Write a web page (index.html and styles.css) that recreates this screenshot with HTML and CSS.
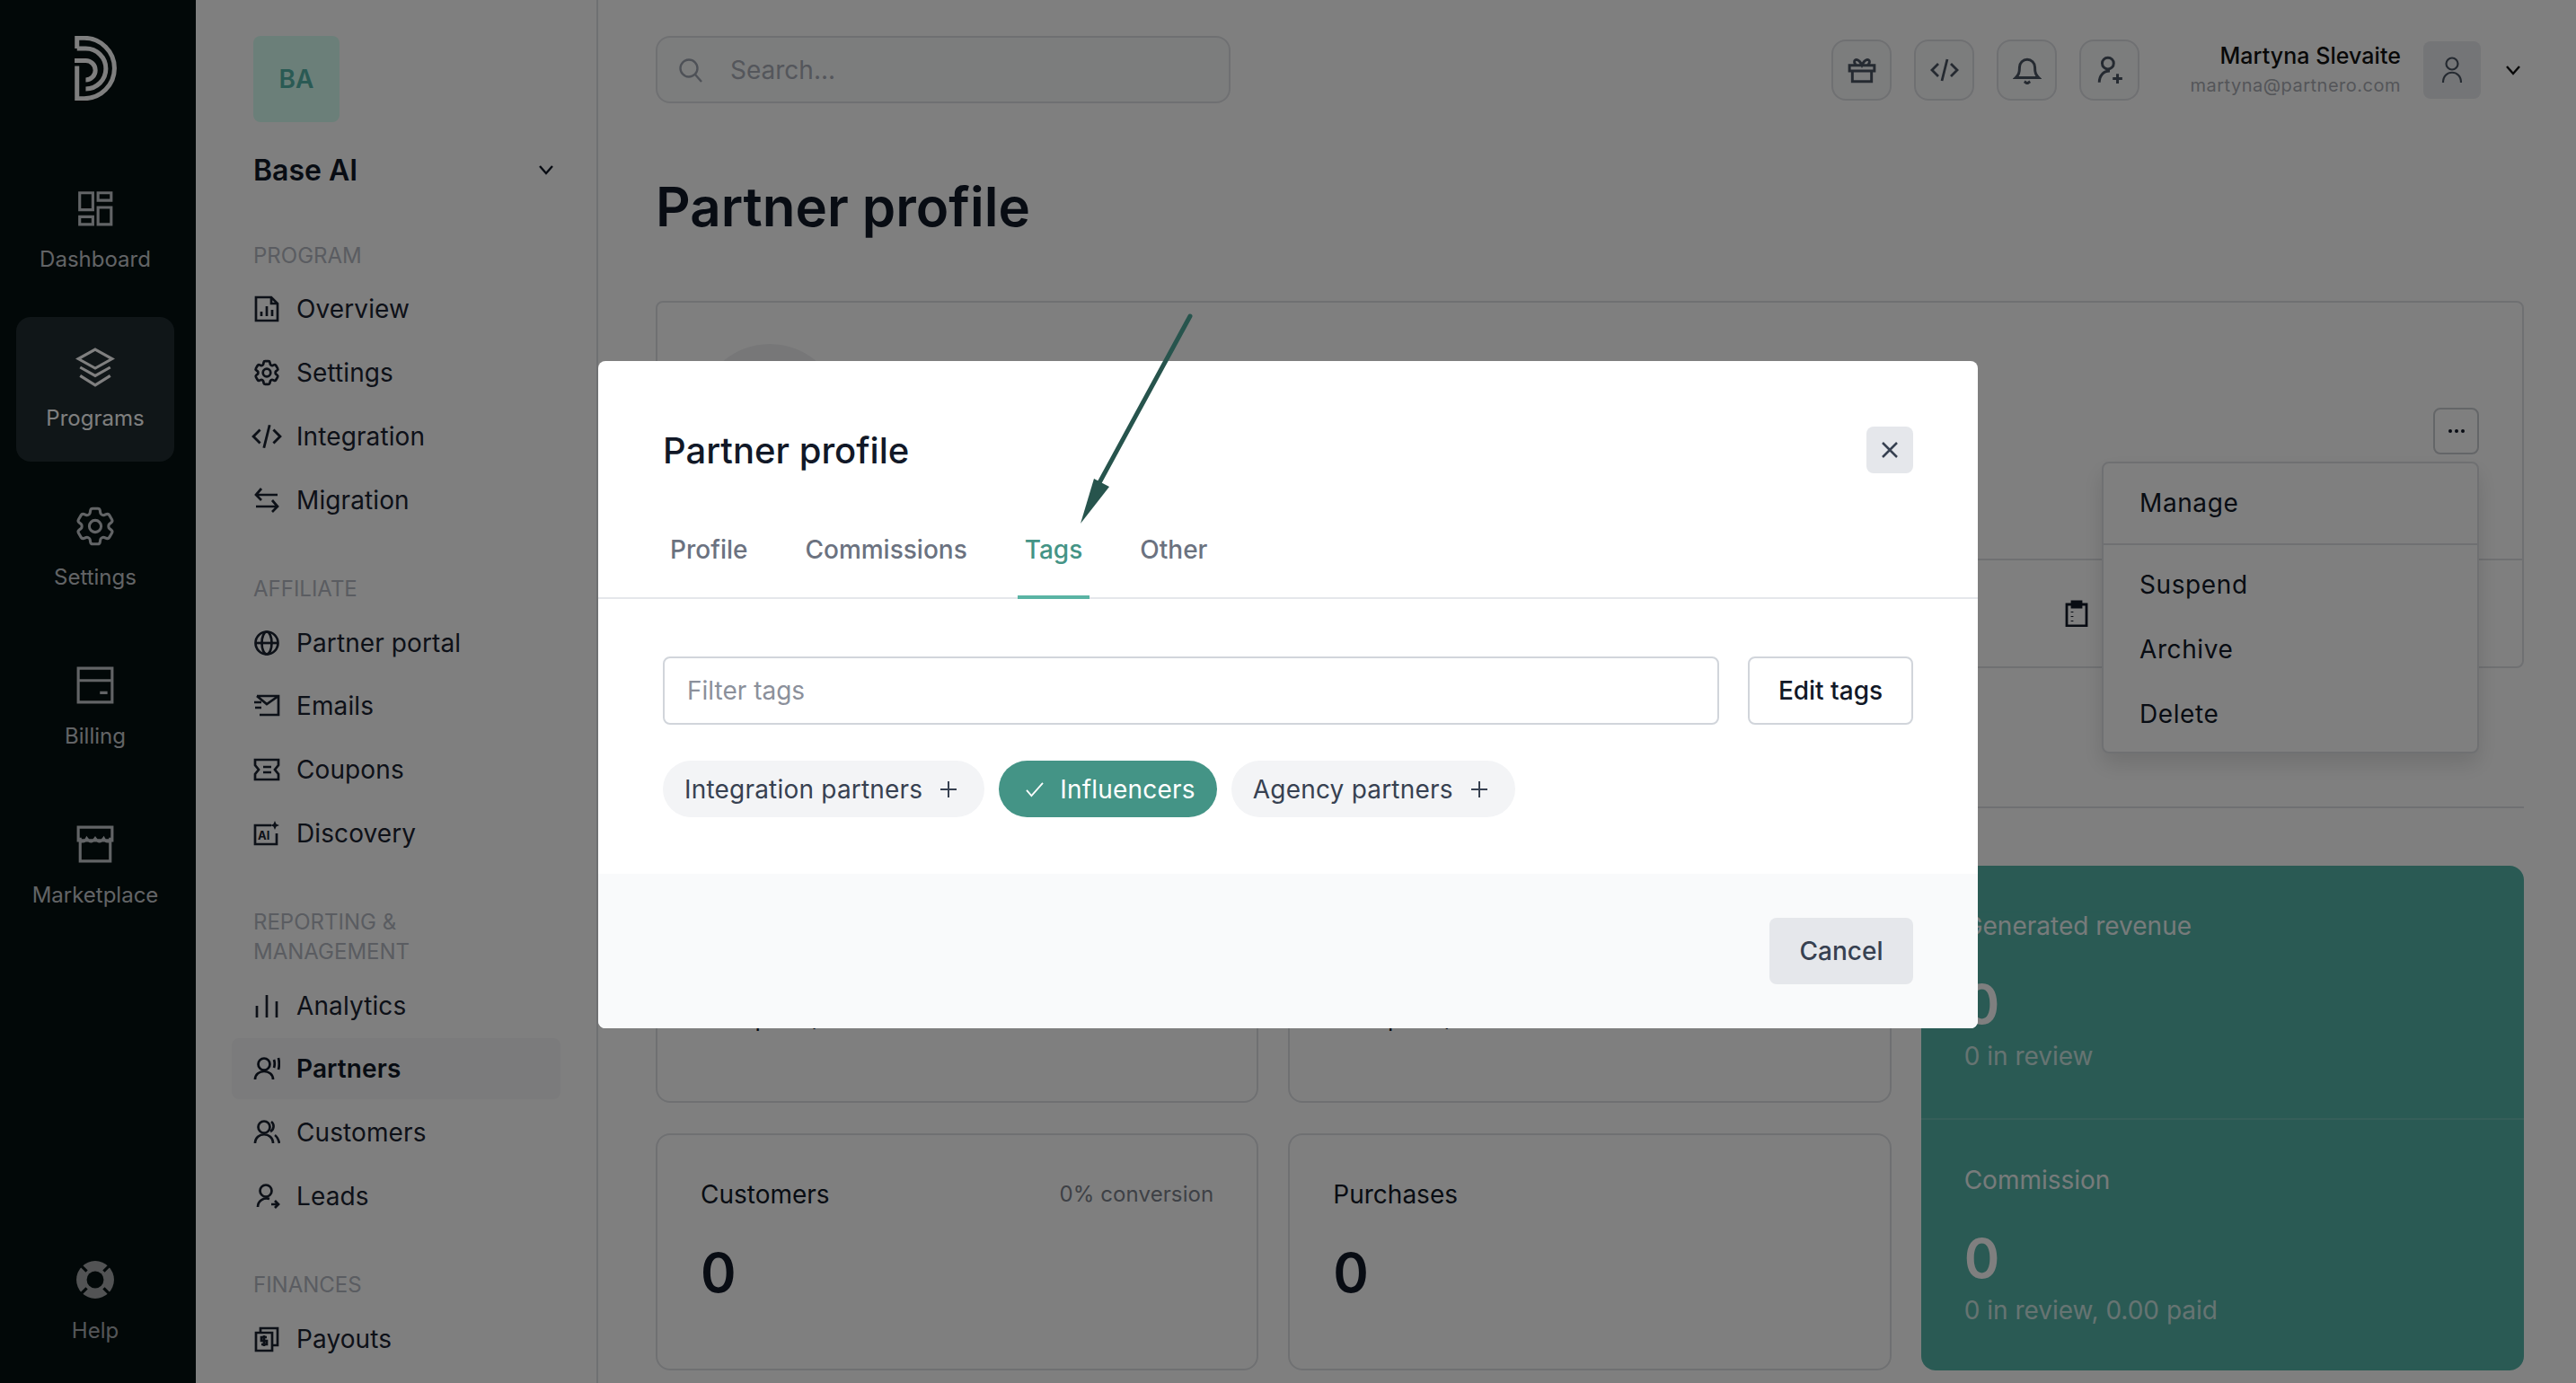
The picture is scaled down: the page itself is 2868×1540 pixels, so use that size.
FILE: index.html
```html
<!DOCTYPE html>
<html lang="en">
<head>
<meta charset="utf-8">
<title>Partner profile</title>
<link rel="stylesheet" href="styles.css">
</head>
<body>
<svg class="defs" width="0" height="0" aria-hidden="true">
  <symbol id="i-gear" viewBox="0 0 24 24"><path d="M9.594 3.94c.09-.542.56-.94 1.11-.94h2.593c.55 0 1.02.398 1.11.94l.213 1.281c.063.374.313.686.645.87.074.04.147.083.22.127.325.196.72.257 1.075.124l1.217-.456a1.125 1.125 0 0 1 1.37.49l1.296 2.247a1.125 1.125 0 0 1-.26 1.431l-1.003.827c-.293.241-.438.613-.43.992a7.723 7.723 0 0 1 0 .255c-.008.378.137.75.43.991l1.004.827c.424.35.534.955.26 1.43l-1.298 2.247a1.125 1.125 0 0 1-1.369.491l-1.217-.456c-.355-.133-.75-.072-1.076.124a6.47 6.47 0 0 1-.22.128c-.331.183-.581.495-.644.869l-.213 1.281c-.09.543-.56.94-1.11.94h-2.594c-.55 0-1.019-.398-1.11-.94l-.213-1.281c-.062-.374-.312-.686-.644-.87a6.52 6.52 0 0 1-.22-.127c-.325-.196-.72-.257-1.076-.124l-1.217.456a1.125 1.125 0 0 1-1.369-.49l-1.297-2.247a1.125 1.125 0 0 1 .26-1.431l1.004-.827c.292-.24.437-.613.43-.991a6.932 6.932 0 0 1 0-.255c.007-.38-.138-.751-.43-.992l-1.004-.827a1.125 1.125 0 0 1-.26-1.43l1.297-2.247a1.125 1.125 0 0 1 1.37-.491l1.216.456c.356.133.751.072 1.076-.124.072-.044.146-.086.22-.128.332-.183.582-.495.644-.869l.214-1.28Z"/><circle cx="12" cy="12" r="3"/></symbol>
  <symbol id="i-code" viewBox="0 0 32 32"><path d="M9 9 2 16l7 7M23 9l7 7-7 7M19 4l-6 24"/></symbol>
  <symbol id="i-chev" viewBox="0 0 24 24"><path d="m5 8 7 8 7-8"/></symbol>
  <symbol id="i-plus" viewBox="0 0 20 20"><path d="M10 1v18M1 10h18"/></symbol>
</svg>

<div class="app">
  <nav class="rail">
    <svg class="logo" viewBox="38 30 140 215"><path d="M46 72V37h24a100.500 100.500 0 0 1 0 201H46V130M46 72h29a67 67 0 0 1 0 134M38 112h37a32 32 0 0 1 0 64"/></svg>
    <ul class="rail-list">
      <li class="rail-item">
        <svg class="rail-icon" viewBox="0 0 42 42"><path d="M4.500 4.500h14v18h-14zM24 4.500h14v8H24zM4.500 30h14v8h-14zM24 20h14v18H24z"/></svg>
        <span>Dashboard</span>
      </li>
      <li class="rail-item is-active">
        <svg class="rail-icon" viewBox="0 0 42 42"><path d="M21 2 39 12 21 22 3 12zM5 21l16 9 16-9M5 30l16 10 16-10"/></svg>
        <span>Programs</span>
      </li>
      <li class="rail-item">
        <svg class="rail-icon icon-gear" viewBox="2 2 20 20"><use href="#i-gear" width="24" height="24"/></svg>
        <span>Settings</span>
      </li>
      <li class="rail-item">
        <svg class="rail-icon" viewBox="0 0 42 42"><path d="M3 3h36v36H3zM3 16h36M26 29h8"/></svg>
        <span>Billing</span>
      </li>
      <li class="rail-item">
        <svg class="rail-icon" viewBox="0 0 42 42"><path d="M3 3h36v14H3zM5 14v25h32V14M3 15c3 4 7 4 9 0 3 4 6 4 9 0 3 4 6 4 9 0 2 4 6 4 9 0"/></svg>
        <span>Marketplace</span>
      </li>
      <li class="rail-item rail-help">
        <svg class="rail-icon help-icon" viewBox="0 0 42 42"><circle class="help-disc" cx="21" cy="21" r="20"/><circle class="help-hole" cx="21" cy="21" r="9"/><path class="help-cut" d="M6 6l6 6M36 6l-6 6M6 36l6-6M36 36l-6-6"/></svg>
        <span>Help</span>
      </li>
    </ul>
  </nav>

  <aside class="side">
    <div class="side-brand">
      <div class="brand-tile">BA</div>
      <div class="brand-row"><span>Base AI</span><svg class="chev" viewBox="0 0 24 24"><use href="#i-chev"/></svg></div>
    </div>

    <section class="side-sec">
      <h3 class="side-label">PROGRAM</h3>
      <a class="side-item"><svg viewBox="0 0 30 30"><path d="M3 2h17l7 7v19H3zM20 2v7h7M9 23v-5M15 23V12M21 23v-7"/></svg>Overview</a>
      <a class="side-item"><svg class="icon-gear" viewBox="1.500 1.500 21 21"><use href="#i-gear" width="24" height="24"/></svg>Settings</a>
      <a class="side-item"><svg class="icon-code" viewBox="0 0 32 32"><use href="#i-code"/></svg>Integration</a>
      <a class="side-item"><svg viewBox="0 0 30 30"><path d="M9 2 3 9l6 6M3 9h24M21 15l6 7-6 6M27 22H3"/></svg>Migration</a>
    </section>

    <section class="side-sec">
      <h3 class="side-label">AFFILIATE</h3>
      <a class="side-item"><svg viewBox="0 0 30 30"><circle cx="15" cy="15" r="12.500"/><ellipse cx="15" cy="15" rx="5.500" ry="12.500"/><path d="M3 15h24"/></svg>Partner portal</a>
      <a class="side-item"><svg viewBox="0 0 30 30"><path d="M4 4h24v21H7M4 4l11 9 13-9M1 11h8M2 17h7"/></svg>Emails</a>
      <a class="side-item"><svg viewBox="0 0 30 30"><path d="M2 4h26v6l-4 5 4 5v6H2v-6l4-5-4-5zM11 12h9M11 18h9"/></svg>Coupons</a>
      <a class="side-item"><svg viewBox="0 0 30 30"><path d="M20 6H2v21h24V15"/><text class="ai-text" x="5" y="22">AI</text><path class="fill" d="m24 1 1.500 3.500L29 6l-3.500 1.500L24 11l-1.500-3.500L19 6l3.500-1.500z"/></svg>Discovery</a>
    </section>

    <section class="side-sec">
      <h3 class="side-label">REPORTING &amp;<br>MANAGEMENT</h3>
      <a class="side-item"><svg viewBox="0 0 30 30"><path d="M4 15v13M15 3v25M26 10v18"/></svg>Analytics</a>
      <a class="side-item is-current"><svg viewBox="0 0 30 30"><circle cx="12" cy="10" r="6.500"/><path d="M2 27c0-12 20-12 20 0M23 5c1 3 1 6 0 9M28 3c1 4 1 9 0 13"/></svg>Partners</a>
      <a class="side-item"><svg viewBox="0 0 30 30"><circle cx="12" cy="9" r="6.500"/><path d="M2 27c0-13 20-13 20 0M20 3c4 3 3 9-1 11M24 18c3 2 4 5 5 9"/></svg>Customers</a>
      <a class="side-item"><svg viewBox="0 0 30 30"><circle cx="14" cy="9" r="6.500"/><path d="M5 27c0-7 7-11 13-9M20 24h8M24 20l4 4-4 4"/></svg>Leads</a>
    </section>

    <section class="side-sec">
      <h3 class="side-label">FINANCES</h3>
      <a class="side-item"><svg viewBox="0 0 30 30"><path d="M8 8V3h19v19h-6M3 8h18v20H3zM15 13H9v4h6v4H9M12 11v12"/></svg>Payouts</a>
    </section>
  </aside>

  <main class="main">
    <header class="topbar">
      <label class="search">
        <svg viewBox="0 0 30 30"><circle cx="13" cy="13" r="9.500"/><path d="m20 20 7 8"/></svg>
        <input class="search-input" placeholder="Search...">
      </label>
      <div class="top-right">
        <button class="top-btn"><svg viewBox="0 0 30 30"><path d="M2 10h26v6H2zM5 16v11h20V16M9 10c-5-5 1-9 5-2l1 2 1-2c4-7 10-3 5 2"/></svg></button>
        <button class="top-btn"><svg viewBox="0 0 32 32"><use href="#i-code"/></svg></button>
        <button class="top-btn"><svg viewBox="0 0 30 30"><path d="M3 23c3-3 4-5 4-11a8 8 0 0 1 16 0c0 6 1 8 4 11zM12 27l3 2 3-2"/></svg></button>
        <button class="top-btn"><svg viewBox="0 0 30 30"><circle cx="13" cy="8" r="6"/><path d="M4 28c0-7 4-12 11-12M18 24h10M23 19v10"/></svg></button>
        <div class="user">
          <div class="user-name">Martyna Slevaite</div>
          <div class="user-mail">martyna@partnero.com</div>
        </div>
        <div class="avatar"><svg viewBox="0 0 30 30"><circle cx="15" cy="8" r="6.500"/><path d="M5 29c0-15 20-15 20 0"/></svg></div>
        <svg class="chev top-chev" viewBox="0 0 24 24"><use href="#i-chev"/></svg>
      </div>
    </header>

    <h1 class="page-title">Partner profile</h1>

    <section class="profile">
      <div class="profile-top">
        <div class="profile-photo"></div>
        <button class="dots"><i></i><i></i><i></i></button>
      </div>
      <div class="profile-bottom">
        <svg class="clip" viewBox="0 0 28 30"><path d="M3 5h22v24H3zM9 2h10v6H9zM9 13v1M9 18v1M9 23v1"/></svg>
      </div>
      <div class="menu">
        <div class="menu-head">Manage</div>
        <div class="menu-group">
          <div class="menu-item">Suspend</div>
          <div class="menu-item">Archive</div>
          <div class="menu-item">Delete</div>
        </div>
      </div>
    </section>

    <hr class="rule">

    <section class="stats">
      <div class="stat">
        <div class="stat-head"><span>Clicks</span></div>
        <div class="stat-num">0<span class="stat-note">per 2/0</span></div>
      </div>
      <div class="stat">
        <div class="stat-head"><span>Signups</span></div>
        <div class="stat-num">0<span class="stat-note">per 2/0</span></div>
      </div>
      <div class="stat-teal">
        <div class="teal-block">
          <div class="teal-label">Generated revenue</div>
          <div class="teal-num">0</div>
          <div class="teal-sub">0 in review</div>
        </div>
        <div class="teal-block teal-second">
          <div class="teal-label">Commission</div>
          <div class="teal-num">0</div>
          <div class="teal-sub">0 in review, 0.00 paid</div>
        </div>
      </div>
      <div class="stat">
        <div class="stat-head"><span>Customers</span><span class="stat-side">0% conversion</span></div>
        <div class="stat-num">0</div>
      </div>
      <div class="stat">
        <div class="stat-head"><span>Purchases</span></div>
        <div class="stat-num">0</div>
      </div>
    </section>
  </main>
</div>

<div class="scrim">
  <div class="modal">
    <div class="modal-head">
      <h2 class="modal-title">Partner profile</h2>
      <button class="close"><svg viewBox="0 0 20 20"><path d="m2 2 16 16M18 2 2 18"/></svg></button>
    </div>
    <div class="tabs">
      <span class="tab">Profile</span>
      <span class="tab">Commissions</span>
      <span class="tab is-on">Tags</span>
      <span class="tab">Other</span>
    </div>
    <div class="modal-body">
      <div class="filter-row">
        <input class="filter" placeholder="Filter tags">
        <button class="edit">Edit tags</button>
      </div>
      <div class="chips">
        <span class="chip">Integration partners<svg viewBox="0 0 20 20"><use href="#i-plus"/></svg></span>
        <span class="chip is-on"><svg viewBox="0 0 24 20"><path d="m2 11 6 7L22 2"/></svg>Influencers</span>
        <span class="chip">Agency partners<svg viewBox="0 0 20 20"><use href="#i-plus"/></svg></span>
      </div>
    </div>
    <div class="modal-foot"><button class="cancel">Cancel</button></div>
  </div>
  <svg class="arrow" viewBox="0 0 140 250"><path class="arrow-line" d="M128 9 24 200"/><path class="arrow-head" d="M6 240 21 190 38 199Z"/></svg>
</div>
</body>
</html>
```

FILE: styles.css
```css
* { box-sizing: border-box; }
html, body { margin: 0; height: 100%; }
body {
  width: 2868px;
  height: 1540px;
  overflow: hidden;
  position: relative;
  background: #fff;
  color: #111827;
  font-family: Inter, "Noto Sans", sans-serif;
  font-size: 28px;
}
h1, h2, h3, ul { margin: 0; padding: 0; list-style: none; font: inherit; }
button { font: inherit; cursor: pointer; }
input { font: inherit; }
.defs { display: block; position: absolute; }

svg { fill: none; stroke: currentColor; stroke-width: 2; flex: none; }

.app { display: flex; width: 2868px; height: 1540px; overflow: hidden; }

/* rail */
.rail {
  width: 218px;
  flex: none;
  background: #041010;
  color: #c4c8cc;
  padding: 40px 24px 10px 18px;
  display: flex;
  flex-direction: column;
}
.logo { width: 47px; height: 72px; margin-left: 65px; stroke-width: 15; color: #fff; }
.rail-list { flex: 1; margin-top: 64px; display: flex; flex-direction: column; gap: 16px; }
.rail-item {
  height: 161px;
  border-radius: 16px;
  display: flex;
  flex-direction: column;
  align-items: center;
  padding-top: 34px;
  font-size: 24px;
  letter-spacing: 0;
  line-height: 32px;
}
.rail-item span { margin-top: 19px; }
.rail-item.is-active { background: #202c30; color: #fff; }
.rail-icon { width: 44px; height: 44px; stroke-width: 3; }
.rail-icon.icon-gear { stroke-width: 1.400; }
.rail-help { margin-top: auto; color: #a8acb0; }
.help-disc { fill: #a4a6a8; stroke: none; }
.help-hole { fill: #041010; stroke: none; }
.help-cut { stroke: #041010; stroke-width: 3; }

/* secondary sidebar */
.side {
  width: 448px;
  flex: none;
  border-right: 2px solid #dfe1e5;
  padding: 40px 40px 0;
  overflow: hidden;
}
.side-brand { padding-left: 24px; }
.brand-tile {
  width: 96px;
  height: 96px;
  border-radius: 8px;
  background: #d6fef2;
  color: #54b4a8;
  font-weight: 600;
  display: flex;
  align-items: center;
  justify-content: center;
}
.brand-row {
  margin-top: 31px;
  height: 44px;
  display: flex;
  align-items: center;
  justify-content: space-between;
  font-size: 32px;
  font-weight: 600;
  padding-right: 4px;
}
.chev { width: 24px; height: 24px; stroke-width: 2.400; }
.side-sec { margin-top: 48.500px; display: flex; flex-direction: column; gap: 2.700px; }
.side-brand + .side-sec { margin-top: 57px; }
.side-label {
  font-size: 24px;
  line-height: 33px;
  color: #b4b9c2;
  padding-left: 24px;
  margin-bottom: 6.800px;
}
.side-item {
  height: 68px;
  display: flex;
  align-items: center;
  gap: 18px;
  padding-left: 24px;
  border-radius: 8px;
  letter-spacing: .1px;
  color: #1a2230;
}
.side-item svg { width: 30px; height: 30px; stroke-width: 2.700; }
.side-item svg .fill { fill: currentColor; stroke: none; }
.side-item svg .ai-text { fill: currentColor; stroke: none; font-size: 13px; font-weight: 700; letter-spacing: 0; }
.side-item svg.icon-gear { stroke-width: 1.900; }
.side-item svg.icon-code { width: 34px; height: 34px; margin: 0 -2px; stroke-width: 2.700; }
.side-item.is-current { background: #f7f7f8; font-weight: 600; color: #111827; }

/* main */
.main { flex: 1; min-width: 0; padding: 40px 58px 0 64px; }
.topbar { display: flex; align-items: center; justify-content: space-between; height: 75px; }
.search {
  width: 640px;
  height: 75px;
  border: 2px solid #dfe1e5;
  border-radius: 16px;
  background: #f9fafb;
  display: flex;
  align-items: center;
  gap: 29px;
  padding-left: 22px;
  color: #9ca3af;
}
.search svg { width: 30px; height: 30px; stroke-width: 2.400; }
.search-input { flex: 1; border: 0; background: none; outline: 0; letter-spacing: 0; min-width: 0; padding: 0; }
.search-input::placeholder { color: #a8adb7; opacity: 1; }
.top-right { display: flex; align-items: center; gap: 25px; }
.top-btn {
  width: 67px;
  height: 68px;
  border: 2px solid #dfe1e5;
  border-radius: 16px;
  background: #f9fafb;
  color: #4b5563;
  display: flex;
  align-items: center;
  justify-content: center;
  padding: 0;
}
.top-btn svg { width: 32px; height: 32px; stroke-width: 2.800; }
.user { text-align: right; margin-left: 31px; display: flex; flex-direction: column; gap: 3px; padding-top: 2px; }
.user-name { font-size: 25px; line-height: 30px; font-weight: 500; color: #111; letter-spacing: .05px; }
.user-mail { font-size: 20px; line-height: 30px; color: #a8abb2; letter-spacing: .5px; }
.avatar {
  width: 64px;
  height: 64px;
  border-radius: 8px;
  background: #e9eaee;
  color: #4b5563;
  display: flex;
  align-items: center;
  justify-content: center;
}
.avatar svg { width: 30px; height: 30px; stroke-width: 2.200; }
.top-chev { margin-left: -1px; color: #111; }

.page-title { margin-top: 79px; font-size: 60px; line-height: 72px; font-weight: 600; }

.profile {
  position: relative;
  margin-top: 69px;
  height: 409px;
  border: 2px solid #dfe1e5;
  border-radius: 8px;
  display: flex;
  flex-direction: column;
}
.profile-top {
  height: 287px;
  flex: none;
  border-bottom: 2px solid #dfe1e5;
  display: flex;
  justify-content: space-between;
  padding: 46px 48px 0 45px;
}
.profile-photo { width: 160px; height: 160px; border-radius: 50%; background: #eeeff1; }
.dots {
  width: 51px;
  height: 52px;
  margin-top: 71px;
  border: 2px solid #c9ccd1;
  border-radius: 8px;
  background: #fff;
  display: flex;
  align-items: center;
  justify-content: center;
  gap: 3px;
  padding: 0;
}
.dots i { width: 4px; height: 4px; border-radius: 50%; background: #111827; }
.profile-bottom { flex: 1; display: flex; align-items: center; justify-content: flex-end; padding-right: 482px; }
.clip { width: 28px; height: 30px; stroke-width: 2.800; }

.menu {
  position: absolute;
  top: 177px;
  right: 48px;
  width: 420px;
  height: 325px;
  border: 2px solid #dfe1e5;
  border-radius: 8px;
  background: #fff;
  box-shadow: 0 12px 24px rgba(0,0,0,.12);
}
.menu-head {
  height: 91px;
  border-bottom: 2px solid #dfe1e5;
  display: flex;
  align-items: center;
  padding: 0 0 2px 40px;
  letter-spacing: .6px;
}
.menu-group { padding: 8px 0; }
.menu-item { height: 72px; display: flex; align-items: center; padding-left: 40px; letter-spacing: .6px; }

.rule { margin: 154px 0 0; border: 0; border-top: 2px solid #dfe1e5; }

.stats {
  margin-top: 64px;
  display: grid;
  grid-template-columns: repeat(3, 1fr);
  grid-auto-rows: 264px;
  gap: 34px 33px;
}
.stat {
  border: 2px solid #dfe1e5;
  border-radius: 16px;
  padding: 46px 48px;
}
.stat-head { display: flex; justify-content: space-between; align-items: center; line-height: 40px; }
.stat-side { font-size: 24px; color: #7d828c; letter-spacing: .1px; }
.stat-num { margin-top: 31px; font-size: 60px; line-height: 72px; font-weight: 600; display: flex; align-items: baseline; }
.stat-note { margin-left: 21px; font-size: 26px; font-weight: 400; transform: translateY(2px); }
.stat-teal {
  grid-column: 3;
  grid-row: 1 / span 2;
  background: #54b4a8;
  border-radius: 16px;
  color: #fff;
  display: flex;
  flex-direction: column;
  overflow: hidden;
}
.teal-block { height: 281px; padding: 47px 48px 0; flex: none; }
.teal-second { height: auto; flex: 1; border-top: 2px solid #6cbdb2; }
.teal-label { line-height: 40px; opacity: .9; }
.teal-num { margin-top: 31px; font-size: 60px; line-height: 72px; font-weight: 600; }
.teal-sub { margin-top: 2px; line-height: 40px; opacity: .7; }

/* modal */
.scrim {
  position: absolute;
  inset: 0;
  background: rgba(0,0,0,.5);
  display: flex;
  justify-content: center;
  padding-top: 402px;
}
.modal {
  width: 1536px;
  height: 743px;
  background: #fff;
  border-radius: 8px;
  overflow: hidden;
  display: flex;
  flex-direction: column;
}
.modal-head {
  display: flex;
  align-items: center;
  justify-content: space-between;
  padding: 73px 72px 0;
  height: 125px;
}
.modal-title { font-size: 40px; line-height: 52px; font-weight: 500; transform: translateY(1px); }
.close {
  width: 52px;
  height: 52px;
  border: 0;
  border-radius: 8px;
  background: #e5e7eb;
  color: #374151;
  display: flex;
  align-items: center;
  justify-content: center;
  padding: 0;
}
.close svg { width: 20px; height: 20px; stroke-width: 2.500; }
.tabs {
  margin-top: 32px;
  padding-left: 72px;
  border-bottom: 2px solid #e5e7eb;
  display: flex;
  gap: 48px;
}
.tab {
  padding: 33px 8px 31px;
  line-height: 40px;
  border-bottom: 4px solid transparent;
  margin-bottom: -2px;
  color: #6b7280;
  font-weight: 500;
}
.tab.is-on { color: #449486; border-bottom-color: #5ab4a4; }
.modal-body { flex: 1; padding: 64px 72px 0; }
.filter-row { display: flex; gap: 32px; height: 76px; }
.filter {
  flex: 1;
  min-width: 0;
  border: 2px solid #d1d5db;
  border-radius: 8px;
  padding: 0 25px;
  outline: 0;
}
.filter::placeholder { color: #8b909b; opacity: 1; }
.edit {
  width: 184px;
  border: 2px solid #d1d5db;
  border-radius: 8px;
  background: #fff;
  color: #111827;
  font-weight: 500;
  padding: 0;
}
.chips { margin-top: 40px; display: flex; gap: 16px; }
.chip {
  height: 63px;
  border-radius: 32px;
  background: #f3f4f6;
  color: #374151;
  display: flex;
  align-items: center;
  gap: 19px;
  padding: 0 30px 0 24px;
  letter-spacing: .2px;
}
.chip svg { width: 20px; height: 20px; stroke-width: 2; }
.chip.is-on { background: #449486; color: #fff; padding: 0 24px 0 29px; gap: 17px; }
.chip.is-on svg { width: 22px; height: 18px; stroke-width: 2; }
.modal-foot {
  height: 172px;
  background: #f9fafb;
  display: flex;
  align-items: center;
  justify-content: flex-end;
  padding-right: 72px;
}
.cancel {
  width: 160px;
  height: 74px;
  border: 0;
  border-radius: 8px;
  background: #e5e7eb;
  color: #374151;
  font-weight: 500;
  padding: 0;
}
.arrow {
  position: absolute;
  left: 1197px;
  top: 343px;
  width: 140px;
  height: 250px;
  overflow: visible;
}
.arrow-line { stroke: #27544d; stroke-width: 5; stroke-linecap: round; }
.arrow-head { fill: #27544d; stroke: none; }
```
